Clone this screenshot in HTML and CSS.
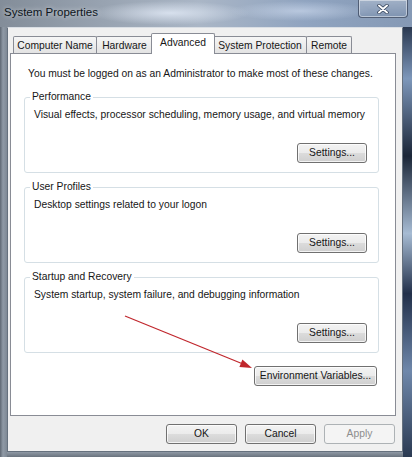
FILE: index.html
```html
<!DOCTYPE html>
<html lang="en">
<head>
<meta charset="utf-8">
<title>System Properties</title>
<link rel="stylesheet" href="styles.css">
</head>
<body>
<div class="window">
  <div class="titlebar">
    <span class="title">System Properties</span>
    <button class="close" aria-label="Close">
      <svg width="12" height="10" viewBox="0 0 12 10" aria-hidden="true">
        <path d="M2 1.5 L10 8.5 M10 1.5 L2 8.5" stroke="#2b3a52" stroke-width="3.4" stroke-linecap="round"/>
        <path d="M2 1.5 L10 8.5 M10 1.5 L2 8.5" stroke="#ffffff" stroke-width="2" stroke-linecap="round"/>
      </svg>
    </button>
  </div>
  <div class="frame">
    <div class="client">
      <div class="tabs">
        <div class="tab tab-cn">Computer Name</div>
        <div class="tab tab-hw">Hardware</div>
        <div class="tab tab-adv is-selected">Advanced</div>
        <div class="tab tab-sp">System Protection</div>
        <div class="tab tab-rm">Remote</div>
      </div>
      <div class="panel">
        <p class="note">You must be logged on as an Administrator to make most of these changes.</p>
        <fieldset class="group">
          <legend>Performance</legend>
          <p>Visual effects, processor scheduling, memory usage, and virtual memory</p>
          <div class="group-actions"><button class="btn btn-settings">Settings...</button></div>
        </fieldset>
        <fieldset class="group">
          <legend>User Profiles</legend>
          <p>Desktop settings related to your logon</p>
          <div class="group-actions"><button class="btn btn-settings">Settings...</button></div>
        </fieldset>
        <fieldset class="group">
          <legend>Startup and Recovery</legend>
          <p>System startup, system failure, and debugging information</p>
          <div class="group-actions"><button class="btn btn-settings">Settings...</button></div>
        </fieldset>
        <div class="env-row"><button class="btn btn-env">Environment Variables...</button></div>
      </div>
      <div class="dialog-buttons">
        <button class="btn btn-dialog">OK</button>
        <button class="btn btn-dialog">Cancel</button>
        <button class="btn btn-dialog" disabled>Apply</button>
      </div>
    </div>
  </div>
  <svg class="arrow" width="412" height="457" viewBox="0 0 412 457" aria-hidden="true">
    <line x1="125" y1="316" x2="243" y2="364" stroke="#c0262c" stroke-width="1.2"/>
    <polygon points="252,368 239.4,366.9 242.4,359.6" fill="#c0262c"/>
  </svg>
</div>
</body>
</html>
```

FILE: styles.css
```css
* {
  box-sizing: border-box;
}

html,
body {
  margin: 0;
  padding: 0;
}

body {
  width: 412px;
  height: 457px;
  overflow: hidden;
  font-family: "Liberation Sans", Arial, sans-serif;
  font-size: 10.3px;
  color: #161616;
  background: #8b95a1;
}

.window {
  position: relative;
  width: 412px;
  height: 457px;
  display: flex;
  flex-direction: column;
}

.titlebar {
  flex: none;
  height: 27px;
  display: flex;
  align-items: flex-start;
  justify-content: space-between;
  background:
    radial-gradient(ellipse 80px 12px at 170px 13px, rgba(232, 240, 252, 0.75), rgba(232, 240, 252, 0)),
    radial-gradient(ellipse 70px 10px at 300px 11px, rgba(205, 218, 238, 0.65), rgba(205, 218, 238, 0)),
    linear-gradient(to right, #838d99 0%, #98a3b1 25%, #aab6c6 48%, #90a4c0 74%, #8599b5 100%);
}

.title {
  margin: 5px 0 0 4px;
  font-size: 11.5px;
  line-height: 14px;
  color: #0d1520;
  text-shadow: 0 0 5px rgba(255, 255, 255, 0.7);
}

.close {
  width: 50px;
  height: 18px;
  margin-right: 4px;
  padding: 0;
  display: flex;
  align-items: center;
  justify-content: center;
  border: 1px solid rgba(50, 62, 84, 0.7);
  border-top: none;
  border-radius: 0 0 4px 4px;
  background: linear-gradient(rgba(255, 255, 255, 0.22), rgba(110, 132, 165, 0.3));
  box-shadow: inset 0 0 0 1px rgba(255, 255, 255, 0.45);
}

.frame {
  flex: 1;
  min-height: 0;
  display: flex;
  padding: 0 9px 5px 7px;
  background:
    linear-gradient(to bottom, #2a3850 0%, #7d97ba 12%, #1b2638 30%, #a6bbd3 48%, #22304a 62%, #6f88ab 80%, #2b3a52 100%) right top / 9px 100% no-repeat,
    linear-gradient(to right, #5f6873 0px, #909aa6 3px, #7f8995 7px) left top / 7px 100% no-repeat,
    linear-gradient(to bottom, #8f99a5, #6a737e) left bottom / 100% 5px no-repeat,
    #8b95a1;
}

.client {
  flex: 1;
  min-width: 0;
  display: flex;
  flex-direction: column;
  background: #f0f0f0;
  border: 1px solid #66717e;
  border-top-color: #d9dee4;
  padding: 5px 6px 7px 2px;
}

.tabs {
  flex: none;
  height: 21px;
  display: flex;
  align-items: flex-end;
  padding-left: 3px;
}

.tab {
  height: 17px;
  margin-bottom: 1px;
  margin-left: -1px;
  display: flex;
  align-items: center;
  justify-content: center;
  white-space: nowrap;
  border: 1px solid #898c95;
  border-bottom: none;
  border-radius: 2px 2px 0 0;
  background: linear-gradient(#f6f6f6, #e3e3e3);
}

.tab:first-child {
  margin-left: 0;
}

.tab.is-selected {
  position: relative;
  z-index: 1;
  height: 21px;
  margin-bottom: 0;
  margin-left: -2px;
  margin-right: -1px;
  padding-bottom: 3px;
  background: #ffffff;
}

.tab-cn { width: 84px; }
.tab-hw { width: 57px; }
.tab-adv { width: 64px; }
.tab-sp { width: 94px; }
.tab-rm { width: 46px; }

.panel {
  flex: 1;
  min-width: 0;
  margin-top: -1px;
  display: flex;
  flex-direction: column;
  background: #ffffff;
  border: 1px solid #898c95;
  padding: 13px 16px 0 13px;
}

.note {
  margin: 0 0 9px 4px;
  line-height: 14px;
  white-space: nowrap;
}

.group {
  margin: 0;
  min-width: 0;
  border: 1px solid #d5dfe5;
  border-radius: 3px;
  padding: 4px 11px 9px 9px;
}

.group + .group {
  margin-top: 7px;
}

.group legend {
  margin-left: -4px;
  padding: 0 2px;
  line-height: 14px;
}

.group p {
  margin: 0;
  line-height: 14px;
  white-space: nowrap;
}

.group-actions {
  display: flex;
  justify-content: flex-end;
  margin-top: 21px;
}

.btn {
  height: 20px;
  padding: 0;
  font: inherit;
  line-height: 18px;
  color: #161616;
  border: 1px solid #707070;
  border-radius: 3px;
  background: linear-gradient(#f3f3f3 0%, #ebebeb 50%, #dcdcdc 50%, #cfcfcf 100%);
  box-shadow: inset 0 0 0 1px rgba(255, 255, 255, 0.75);
}

.btn[disabled] {
  color: #8d8d8d;
  border-color: #adb2b5;
  background: #f4f4f4;
  box-shadow: none;
}

.btn-settings {
  width: 70px;
}

.env-row {
  display: flex;
  justify-content: flex-end;
  margin-top: 13px;
  padding-right: 2px;
}

.btn-env {
  width: 123px;
}

.dialog-buttons {
  flex: none;
  display: flex;
  justify-content: flex-end;
  gap: 8px;
  margin-top: 8px;
  padding-right: 1px;
}

.btn-dialog {
  width: 71px;
}

.arrow {
  position: absolute;
  left: 0;
  top: 0;
  pointer-events: none;
}
```
